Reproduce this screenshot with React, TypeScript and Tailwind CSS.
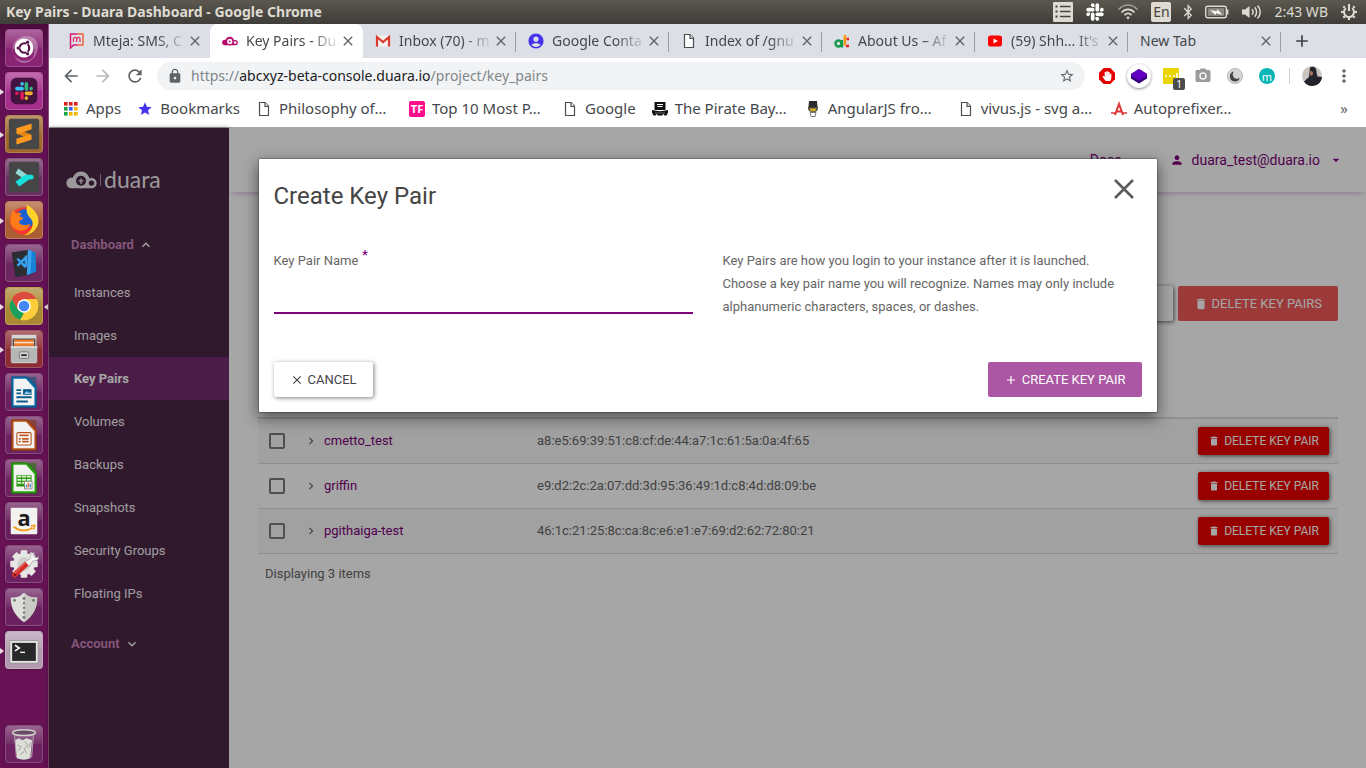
import React from "react";
import {
  MdAccountCircle,
  MdAdd,
  MdArrowBack,
  MdArrowDropDown,
  MdArrowForward,
  MdCameraAlt,
  MdClose,
  MdDelete,
  MdKeyboardArrowDown,
  MdKeyboardArrowRight,
  MdKeyboardArrowUp,
  MdLock,
  MdMoreVert,
  MdPerson,
  MdRefresh,
  MdStar,
  MdStarBorder,
} from "react-icons/md";
import { FaBluetoothB, FaHandPaper, FaSlack } from "react-icons/fa";

/* ---------- Desktop panel ---------- */

function TopPanel() {
  return (
    <header className="flex h-6 items-center bg-linear-to-b from-[#5c584f] to-[#3e3d39] pl-1.5 pr-2 text-[#dfdbd2]">
      <h1 className="flex-1 truncate text-sm font-bold">Key Pairs - Duara Dashboard - Google Chrome</h1>
      <div className="flex items-center gap-3">
        <svg width="20" height="20" viewBox="0 0 20 20" aria-hidden="true">
          <rect width="20" height="20" rx="1" fill="#dfdbd2" />
          <path d="M7 4.500h10.500M7 9.500h10.500M7 14.500h10.500" stroke="#45433e" strokeWidth="1.500" />
          <path d="M2.500 4.500h2M2.500 9.500h2M2.500 14.500h2" stroke="#45433e" strokeWidth="2" />
        </svg>
        <FaSlack className="size-5 text-white" />
        <svg width="22" height="16" viewBox="0 0 22 16" fill="none" stroke="#dfdbd2" aria-hidden="true">
          <path d="M1.500 5.500C7-.5 15-.5 20.500 5.500" strokeWidth="1.600" opacity=".55" />
          <path d="M4.500 8.500c4-4.300 9-4.300 13 0" strokeWidth="1.700" />
          <path d="M7.500 11.200c2.200-2.300 4.800-2.300 7 0" strokeWidth="1.700" />
          <circle cx="11" cy="13.800" r="1" fill="#dfdbd2" />
        </svg>
        <span className="flex size-5 items-center justify-center rounded-xs bg-[#dfdbd2] text-sm text-[#45433e]">En</span>
        <FaBluetoothB className="h-4 w-2.5" />
        <svg width="24" height="14" viewBox="0 0 24 14" fill="none" aria-hidden="true">
          <rect x=".7" y="1.200" width="20.600" height="11.600" rx="2" stroke="#dfdbd2" strokeWidth="1.400" />
          <rect x="2.800" y="3.200" width="16.400" height="7.600" fill="#8e8b83" />
          <path d="M22.500 4.500v5" stroke="#dfdbd2" strokeWidth="1.800" />
          <path d="M5 5l7 1.500V4l5.500 6L11 8v2.200z" fill="#fff" />
        </svg>
        <svg width="21" height="16" viewBox="0 0 21 16" fill="none" stroke="#dfdbd2" strokeWidth="1.500" aria-hidden="true">
          <path d="M1 5.500h3L8.500 2v12L4 10.500H1z" fill="#dfdbd2" stroke="none" />
          <path d="M11 5.200c1.300 1.600 1.300 4 0 5.600M13.700 3.300c2.500 2.700 2.500 6.700 0 9.400M16.500 1.500c3.600 3.700 3.600 9.300 0 13" />
        </svg>
        <time className="text-sm">2:43 WB</time>
        <svg width="18" height="18" viewBox="0 0 18 18" fill="none" stroke="#dfdbd2" aria-hidden="true">
          <path d="M5.800 5.200a5 5 0 1 0 6.400 0" strokeWidth="2" />
          <path d="M9 1v7" strokeWidth="2" />
          <path d="M3.300 3.300l1.500 1.500M14.700 3.300l-1.500 1.500M1 9h2.500M14.500 9h2.500M3.300 14.700l1.500-1.500M14.700 14.700l-1.500-1.500M9 14.500v2.500" strokeWidth="2.200" />
        </svg>
      </div>
    </header>
  );
}

/* ---------- Launcher ---------- */

function DocumentArt({ color, dark, children }: { color: string; dark: string; children: React.ReactNode }) {
  return (
    <>
      <path d="M6 3h16l10 10v22H6z" fill={color} />
      <path d="M22 3h10v10z" fill={dark} opacity=".55" />
      <path d="M8 5h13l9 10v18H8z" fill="#f3f3f3" />
      <path d="M6 3h16l10 10v22H6z" fill="none" stroke={dark} strokeWidth=".8" />
      {children}
    </>
  );
}

type LauncherItem = { name: string; tile: string; running?: boolean; focused?: boolean; art: React.ReactNode };

const gearTeeth = [0, 45, 90, 135, 180, 225, 270, 315];

const launcherItems: LauncherItem[] = [
  {
    name: "Search your computer",
    tile: "bg-[#8a2474]",
    art: (
      <>
        <path d="M7 23C5 10 20 2 30 9c6 5 4 17-2 22 3-8 3-16-4-20C17 8 9 13 7 23z" fill="#fff" opacity=".3" />
        <path d="M8 26c6 9 18 8 23 0-4 9-17 14-23 0z" fill="#fff" opacity=".3" />
        <circle cx="19" cy="19" r="10" fill="#fff" />
        <circle cx="19.500" cy="19" r="5" fill="none" stroke="#5a1349" strokeWidth="2.400" />
        <path d="M19.500 19L12 19M19.500 19l4.500-7M19.500 19l4.500 7" stroke="#fff" strokeWidth="1.300" />
        <circle cx="19.500" cy="19" r="3.600" fill="#fff" />
        <circle cx="12.800" cy="19" r="1.700" fill="#5a1349" />
        <circle cx="22.800" cy="12.800" r="1.700" fill="#5a1349" />
        <circle cx="22.800" cy="25.200" r="1.700" fill="#5a1349" />
      </>
    ),
  },
  {
    name: "Slack",
    tile: "bg-[#a52f8b]",
    running: true,
    art: (
      <>
        <rect x="5" y="5" width="28" height="28" rx="6" fill="#43123f" />
        <g strokeWidth="3.800" strokeLinecap="round">
          <path d="M17 11.500v.1M11.500 16.500h5.500" stroke="#36c5f0" />
          <path d="M21.500 11.500v5.500M26.500 16.500v.1" stroke="#2eb67d" />
          <path d="M26.500 21.500h-5M21.500 26.500v.1" stroke="#ecb22e" />
          <path d="M17 26.500v-5M11.500 21.500v.1" stroke="#e01e5a" />
        </g>
      </>
    ),
  },
  {
    name: "Sublime Text",
    tile: "bg-[#a0682f]",
    running: true,
    art: (
      <>
        <rect x="3" y="3" width="32" height="32" rx="2" fill="#474747" />
        <path d="M11 13l16-5v6l-8 3 8 3v5l-16 5v-6l8-2.500-8-3z" fill="#ff9a1f" />
        <path d="M11 19l8 2.500 8-2.500-8-2z" fill="#d97a10" opacity=".7" />
      </>
    ),
  },
  {
    name: "Editor",
    tile: "bg-[#6a2f61]",
    art: (
      <>
        <rect x="3" y="3" width="32" height="32" rx="2" fill="#454545" />
        <path d="M13 10l11 8-4 4-10-7z" fill="#8fd8d6" />
        <path d="M27 16.500c2.500 0 3.500 5 0 5l-3 .5-10 7-4-5 9-6.500c2-1 5-1 8-1z" fill="#16e0dc" />
      </>
    ),
  },
  {
    name: "Firefox",
    tile: "bg-[#ad5d33]",
    running: true,
    art: (
      <>
        <circle cx="19" cy="20" r="14.500" fill="#f5382e" />
        <circle cx="20" cy="17.500" r="10" fill="#1a5fd6" />
        <path d="M22 3c7 4 14 11 12 20-2 7-8 12-15 12 7-3 10-9 9-14-1-4-5-6-6-10-.5-3 0-5 0-8z" fill="#ffd32a" />
        <path d="M4.500 19c0-5 2-9 4-11 0 2 1 3 2 4 2-1 4-1 6 0-1 1-2 2-2 3 1 1 3 1 4 2-1 2-4 2-5 4 2 4 8 4 12 2-2 6-7 8-12 7-5-1-9-5-9-11z" fill="#ff7b1a" />
      </>
    ),
  },
  {
    name: "Visual Studio Code",
    tile: "bg-[#6c2660]",
    art: (
      <>
        <path d="M6 8l18-3 4 3v23l-18 3z" fill="#2b2d33" />
        <path d="M24 5l7 3 1 20-9 4z" fill="#1583d8" />
        <path d="M23 5l4 1-1 23-4 3z" fill="#3aa4f0" />
        <path d="M12 14.500l9 9M12 22l9-9v10" fill="none" stroke="#35a0ee" strokeWidth="2.600" />
      </>
    ),
  },
  {
    name: "Google Chrome",
    tile: "bg-[#aa8934]",
    running: true,
    focused: true,
    art: (
      <>
        <circle cx="19" cy="19" r="15" fill="#fdce3b" />
        <path d="M6 11.500A15 15 0 0 1 32 11.500H19L12.500 23z" fill="#dc4b3e" />
        <path d="M6 11.500l6.500 11.300 6.500 3.700-4 7.000A15 15 0 0 1 6 11.500z" fill="#1aa05a" />
        <path d="M19 26.500l-1.500 7.500h1.500a15 15 0 0 0 13-22.500H19z" fill="#fdce3b" />
        <circle cx="19" cy="19" r="7.200" fill="#fff" />
        <circle cx="19" cy="19" r="5.600" fill="#4687f4" />
      </>
    ),
  },
  {
    name: "Files",
    tile: "bg-[#8b2c35]",
    running: true,
    art: (
      <>
        <path d="M6 4h26v30H6z" fill="#d4d4d2" />
        <path d="M7 8h24v9H7z" fill="#4a4a48" />
        <path d="M8.500 9h21v8h-21z" fill="#ee7a2c" />
        <path d="M8.500 11.500h21v1.500h-21z" fill="#f8e3cf" />
        <path d="M5 16h28v17H5z" fill="#b7b7b5" />
        <path d="M5 16h28v2H5z" fill="#d8d8d6" />
        <rect x="14" y="22" width="10" height="7" rx="1.500" fill="#d6d6d6" stroke="#777" />
        <path d="M16 25.500h6" stroke="#333" strokeWidth="2" />
      </>
    ),
  },
  {
    name: "LibreOffice Writer",
    tile: "bg-[#6c2260]",
    art: (
      <DocumentArt color="#0a6fa8" dark="#07507c">
        <path d="M11 17h5M11 20.500h5M11 24.500h16M11 29h12" stroke="#0b5c8e" strokeWidth="2" />
        <rect x="18" y="16" width="9" height="6" fill="#0b5c8e" />
        <path d="M19 21l3-3 2 2 2-1v2z" fill="#9bd0ee" />
      </DocumentArt>
    ),
  },
  {
    name: "LibreOffice Impress",
    tile: "bg-[#6c2260]",
    art: (
      <DocumentArt color="#b9531a" dark="#803408">
        <rect x="11.500" y="16.500" width="15" height="13" rx="1.500" fill="#fff" stroke="#b5521b" strokeWidth="1.200" />
        <path d="M14 19.500h10M17 23h7M17 26h7" stroke="#c0561c" strokeWidth="1.800" />
        <path d="M13.500 23h2M13.500 26h2" stroke="#c0561c" strokeWidth="1.800" />
      </DocumentArt>
    ),
  },
  {
    name: "LibreOffice Calc",
    tile: "bg-[#6c2260]",
    art: (
      <DocumentArt color="#2aa50f" dark="#157a04">
        <path d="M11 16h16v12H11z" fill="#2b9a12" />
        <path d="M12 17.500h4M17 17.500h4M22 17.500h4M12 21h4M17 21h4M22 21h4M12 24.200h4M17 24.200h4" stroke="#e6f7df" strokeWidth="2" />
        <rect x="19.500" y="22.500" width="8" height="8" fill="#fff" stroke="#888" />
        <path d="M21.500 29v-3M25.500 29v-4" stroke="#3f86d8" strokeWidth="1.500" />
        <path d="M23.500 29v-5" stroke="#ee6a2c" strokeWidth="1.500" />
      </DocumentArt>
    ),
  },
  {
    name: "Amazon",
    tile: "bg-[#68205c]",
    art: (
      <>
        <rect x="5" y="5" width="28" height="28" rx="1" fill="#f2f2f0" />
        <text x="19" y="24" textAnchor="middle" fontFamily="Open Sans, sans-serif" fontWeight="700" fontSize="23" fill="#1c1c1c">a</text>
        <path d="M8 25c7 5 14 5 20 1" fill="none" stroke="#f79a1c" strokeWidth="1.900" />
        <path d="M26 24l4.500-.3-1.500 4.500" fill="none" stroke="#f79a1c" strokeWidth="1.500" />
      </>
    ),
  },
  {
    name: "System Settings",
    tile: "bg-[#6c2260]",
    art: (
      <>
        <g fill="#e6e6e3">
          {gearTeeth.map((angle) => (
            <rect key={angle} x="15.500" y="4.500" width="7" height="8" rx="1" transform={`rotate(${angle} 19 19)`} />
          ))}
          <circle cx="19" cy="19" r="11.500" />
        </g>
        <circle cx="19" cy="19" r="7" fill="#cfcfcc" />
        <path d="M20 17l6-4c-1-3 1-6 4-6l-1 3.500 2 2 3.500-1c0 3-3 5-6 4l-4 6z" fill="#f4f4f2" stroke="#9a9a98" strokeWidth=".7" />
        <path d="M20 16.500l4 4-13 12c-3 2-6-1-4-4z" fill="#d62f2a" />
        <path d="M20 18L9 29" stroke="#f07a72" strokeWidth="1" />
        <circle cx="9.500" cy="30.500" r="1.200" fill="#7a1210" />
      </>
    ),
  },
  {
    name: "Shield",
    tile: "bg-[#6c2260]",
    art: (
      <>
        <path d="M19 4l4 3c3 1.500 6 2 10 2 0 12-5 20-14 26C10 29 5 21 5 9c4 0 7-.5 10-2z" fill="#dededa" />
        <path d="M19 4l4 3c3 1.500 6 2 10 2 0 12-5 20-14 26z" fill="#c9c9c5" />
        <g fill="#77777a">
          <circle cx="19" cy="10" r="1.500" />
          <circle cx="19" cy="15" r="1.200" />
          <circle cx="19" cy="20" r="1.200" />
          <circle cx="19" cy="25" r="1.200" />
          <circle cx="19" cy="30" r="1.500" />
          <circle cx="9" cy="12" r="1.500" />
          <circle cx="29" cy="12" r="1.500" />
        </g>
      </>
    ),
  },
  {
    name: "Terminal",
    tile: "bg-[#b39ab0]",
    running: true,
    art: (
      <>
        <rect x="4" y="9" width="30" height="24" rx="1" fill="#e4e4e2" stroke="#8d8d8b" strokeWidth=".8" />
        <rect x="6.500" y="11.500" width="25" height="19" fill="#262829" />
        <path d="M9.500 14l4.500 3-4.500 3" fill="none" stroke="#fff" strokeWidth="1.700" />
        <path d="M15 21.500h5" stroke="#fff" strokeWidth="1.500" />
      </>
    ),
  },
];

const trashItem: LauncherItem = {
  name: "Trash",
  tile: "bg-[#6c2260]",
  art: (
    <>
      <path d="M8 8h22l-3 26H11z" fill="#8f6489" opacity=".7" />
      <path d="M9.500 15l4-2 4 2 4-2 6 2-2 19c-4 2-9 2-14 0z" fill="#deded9" />
      <path d="M12 20l4 2-3 4M20 16l3 5-4 3 3 5M26 18l-2 5M15 30l4-3" fill="none" stroke="#a3a39e" strokeWidth="1" />
      <ellipse cx="19" cy="7" rx="12" ry="3" fill="#6d4b69" stroke="#cfcfcb" strokeWidth="1.600" />
      <path d="M9 10l2 23M29 10l-2 23" stroke="#b0a2ae" strokeWidth="1" />
    </>
  ),
};

function LauncherButton({ item }: { item: LauncherItem }) {
  return (
    <button
      type="button"
      aria-label={item.name}
      className={`relative block size-[38px] rounded-sm border border-white/20 shadow-[0_0_2px_rgba(0,0,0,0.4)] ${item.tile}`}
    >
      <span className="absolute inset-x-0 top-0 h-1/2 rounded-t-sm bg-linear-to-b from-white/30 to-white/5" />
      <svg className="absolute inset-0" width="36" height="36" viewBox="0 0 38 38" aria-hidden="true">
        {item.art}
      </svg>
      {item.running && (
        <svg className="absolute -left-1.5 top-4" width="4" height="6" viewBox="0 0 4 6" aria-hidden="true">
          <path d="M0 0l4 3-4 3z" fill="#e6dce4" />
        </svg>
      )}
      {item.focused && (
        <svg className="absolute -right-1.5 top-4" width="4" height="6" viewBox="0 0 4 6" aria-hidden="true">
          <path d="M4 0L0 3l4 3z" fill="#e6dce4" />
        </svg>
      )}
    </button>
  );
}

function Launcher() {
  return (
    <nav
      aria-label="Launcher"
      className="flex w-[49px] shrink-0 flex-col items-start gap-[5px] border-r border-[#8d5283] bg-linear-to-b from-[#4c0b3d] via-[#661155] via-5% to-[#671254] p-[5px]"
    >
      {launcherItems.map((item) => (
        <LauncherButton key={item.name} item={item} />
      ))}
      <div className="mt-auto">
        <LauncherButton item={trashItem} />
      </div>
    </nav>
  );
}

/* ---------- Browser ---------- */

function FileIcon() {
  return (
    <svg width="16" height="16" viewBox="0 0 16 16" fill="#fff" stroke="#4a4d51" strokeWidth="1.200" aria-hidden="true">
      <path d="M3.500 1.500h5.500l3.500 3.500v9.500h-9z" />
      <path d="M9 1.500v3.800h3.500" />
    </svg>
  );
}

function CloudMark({ className }: { className: string }) {
  return (
    <svg className={className} viewBox="0 0 32 18" aria-hidden="true">
      <circle cx="5.800" cy="12" r="5.500" fill="currentColor" />
      <path d="M5.800 13h20v4.500h-20z" fill="currentColor" />
      <circle cx="15.500" cy="9" r="8.700" fill="currentColor" />
      <circle cx="26.300" cy="12.200" r="5.400" fill="currentColor" />
      <circle cx="15.500" cy="9.800" r="5.200" className="fill-(--cloud-hole)" />
      <circle cx="26.300" cy="12.200" r="2.800" className="fill-(--cloud-hole)" />
      <path d="M15.500 7.500v5.500M13 10h5" stroke="currentColor" strokeWidth="1.300" />
    </svg>
  );
}

type Tab = { title: string; icon?: React.ReactNode; active?: boolean; divider?: boolean };

const tabs: Tab[] = [
  {
    title: "Mteja: SMS, C",
    icon: (
      <svg width="16" height="16" viewBox="0 0 16 16" fill="none" strokeWidth="1.500" aria-hidden="true">
        <path d="M8 1H1.500v14L4.500 12H8" stroke="#d81b7a" />
        <path d="M8 12h6V1H8" stroke="#f0643c" />
        <path d="M4.500 9V5.500c0-1.600 3.200-1.600 3.200 0V9M7.700 5.500c0-1.600 3.300-1.600 3.300 0V9" stroke="#e13560" strokeWidth="1.300" />
      </svg>
    ),
  },
  {
    title: "Key Pairs - Du",
    icon: <CloudMark className="h-4 w-4 text-[#b5076b] [--cloud-hole:#ffffff]" />,
    active: true,
  },
  {
    title: "Inbox (70) - m",
    icon: (
      <svg width="16" height="16" viewBox="0 0 16 16" aria-hidden="true">
        <path d="M1 2.500h14v11H1z" fill="#f3f0ee" />
        <path d="M2 13.500V4l6 5 6-5v9.500" fill="none" stroke="#d93a2b" strokeWidth="2.200" />
      </svg>
    ),
    divider: true,
  },
  { title: "Google Conta", icon: <MdAccountCircle className="size-[18px] shrink-0 text-[#4433ee]" />, divider: true },
  { title: "Index of /gnu", icon: <FileIcon />, divider: true },
  {
    title: "About Us – Af",
    icon: (
      <svg width="16" height="16" viewBox="0 0 16 16" fill="none" strokeWidth="2.400" aria-hidden="true">
        <circle cx="4.500" cy="10.500" r="3" stroke="#149a4a" />
        <path d="M8 7v7.500" stroke="#149a4a" />
        <path d="M11 2v10.500" stroke="#f49a12" />
        <path d="M9.500 6h2.500" stroke="#f49a12" />
        <path d="M12.500 6H15M12 13h3" stroke="#e52222" />
      </svg>
    ),
    divider: true,
  },
  {
    title: "(59) Shh... It's",
    icon: (
      <svg width="16" height="16" viewBox="0 0 16 16" aria-hidden="true">
        <rect x="1" y="2.500" width="14" height="11" rx="2.500" fill="#f00" />
        <path d="M6.500 5.500v5L11 8z" fill="#fff" />
      </svg>
    ),
    divider: true,
  },
  { title: "New Tab", divider: true },
];

function TabStrip() {
  return (
    <div className="flex h-[34px] items-stretch bg-[#dcdfe6] pl-2">
      <div role="tablist" className="flex min-w-0 flex-[0_1_1224px]">
        {tabs.map((tab) => (
          <div
            key={tab.title}
            role="tab"
            aria-selected={!!tab.active}
            className={`relative flex min-w-0 flex-1 items-center gap-2 pl-3 pr-[7px] ${tab.active ? "rounded-t-lg bg-white" : ""}`}
          >
            {tab.icon && <span className="flex w-4 shrink-0 justify-center">{tab.icon}</span>}
            <span
              className={`-mr-2 min-w-0 flex-1 overflow-hidden whitespace-nowrap text-sm text-[#45484c] ${
                tab.icon ? "[mask-image:linear-gradient(to_right,black_68%,transparent)]" : ""
              }`}
            >
              {tab.title}
            </span>
            <button type="button" aria-label={`Close ${tab.title}`} className="shrink-0 text-[#5f6368]">
              <MdClose className="size-4" />
            </button>
            {tab.divider && <span className="absolute right-0 top-2 h-5 w-px bg-[#9a9da3]" />}
          </div>
        ))}
      </div>
      <button type="button" aria-label="New tab" className="ml-[11px] flex items-center text-[#3c4043]">
        <MdAdd className="size-5" />
      </button>
    </div>
  );
}

function Toolbar() {
  const navButton = "flex size-8 items-center justify-center";
  return (
    <div className="flex h-9 items-center bg-white pl-1.5 text-[#5f6368]">
      <button type="button" aria-label="Back" className={navButton}>
        <MdArrowBack className="size-5" />
      </button>
      <button type="button" aria-label="Forward" className={navButton}>
        <MdArrowForward className="size-5 text-[#b9bbbe]" />
      </button>
      <button type="button" aria-label="Reload" className={navButton}>
        <MdRefresh className="size-5" />
      </button>
      <div className="ml-1.5 flex h-7 flex-1 items-center rounded-full bg-[#f1f3f4] px-2.5">
        <MdLock className="size-4 shrink-0" />
        <p className="flex-1 pl-2 text-sm text-[#80868b]">
          https://<span className="text-[#202124]">abcxyz-beta-console.duara.io</span>/project/key_pairs
        </p>
        <button type="button" aria-label="Bookmark this page">
          <MdStarBorder className="size-4" />
        </button>
      </div>
      <div className="ml-1.5 flex items-center">
        <button type="button" aria-label="Ad blocker" className={navButton}>
          <svg width="16" height="16" viewBox="0 0 16 16" aria-hidden="true">
            <path d="M4.700 0h6.600L16 4.700v6.600L11.300 16H4.700L0 11.300V4.700z" fill="#e30000" />
            <FaHandPaper x="3" y="3" size={10} color="#fff" />
          </svg>
        </button>
        <button type="button" aria-label="Layers" className={navButton}>
          <span className="flex size-6 items-center justify-center rounded-full bg-white shadow-[0_1px_3px_rgba(0,0,0,0.45)]">
            <svg width="16" height="16" viewBox="0 0 16 16" aria-hidden="true">
              <path d="M0 6l8-5 8 5v4.500L8 15.500 0 10.500z" fill="#36007d" />
              <path d="M0 6l8-5 8 5v1.500l-8 5-8-5z" fill="#6200c2" />
            </svg>
          </span>
        </button>
        <button type="button" aria-label="Notes" className={`${navButton} relative`}>
          <svg width="16" height="16" viewBox="0 0 16 16" aria-hidden="true">
            <rect width="16" height="16" rx="1" fill="#ead500" />
            <path d="M2 8h2M6 8h2M10 8h2M14 5v6" stroke="#fff" strokeWidth="1.600" />
          </svg>
          <span className="absolute bottom-0.5 right-0.5 flex size-3 items-center justify-center rounded-xs bg-[#4d4d4d] text-[10px] text-white">1</span>
        </button>
        <button type="button" aria-label="Screenshot" className={navButton}>
          <MdCameraAlt className="size-[18px] text-[#9b9b9b]" />
        </button>
        <button type="button" aria-label="Dark mode" className={navButton}>
          <svg width="16" height="16" viewBox="0 0 16 16" aria-hidden="true">
            <circle cx="8" cy="8" r="7.600" fill="#d6d6d6" stroke="#aaa" strokeWidth=".8" />
            <path d="M7 3.500A5 5 0 1 0 12.800 9.500 4 4 0 0 1 7 3.500z" fill="#444" />
          </svg>
        </button>
        <button type="button" aria-label="Mteja" className={navButton}>
          <span className="flex size-4 items-center justify-center rounded-full bg-[#07b5b5] text-[11px] leading-none text-white">m</span>
        </button>
        <span className="ml-1.5 mr-3 h-4 w-px bg-[#cfd2d6]" />
        <button type="button" aria-label="Profile">
          <svg width="20" height="20" viewBox="0 0 20 20" aria-hidden="true">
            <circle cx="10" cy="10" r="10" fill="#c9c4bf" />
            <path d="M8 1.500c4-2 7 1 6.500 5l1 4 4.500.5c-.3 5-4.500 9-10 9-3.500 0-6.500-2-8-4.500L7 11z" fill="#22232b" />
            <path d="M8 5.500c1.500-1 3 0 3 2s-2 3-3 1.500z" fill="#a9705a" />
          </svg>
        </button>
        <button type="button" aria-label="Menu" className="flex w-11 justify-center">
          <MdMoreVert className="size-5" />
        </button>
      </div>
    </div>
  );
}

const appDots = [
  "#e02020", "#e02020", "#e02020",
  "#16a34a", "#3b5bfd", "#f2b600",
  "#16a34a", "#f2b600", "#f2b600",
];

const bookmarks: { title: string; short?: boolean; icon: React.ReactNode }[] = [
  {
    title: "Apps",
    short: true,
    icon: (
      <svg width="16" height="16" viewBox="0 0 16 16" aria-hidden="true">
        {appDots.map((fill, i) => (
          <rect key={i} x={1 + (i % 3) * 5} y={1 + Math.floor(i / 3) * 5} width="3.600" height="3.600" fill={fill} />
        ))}
      </svg>
    ),
  },
  { title: "Bookmarks", short: true, icon: <MdStar className="size-4 text-[#4433ee]" /> },
  { title: "Philosophy of…", icon: <FileIcon /> },
  {
    title: "Top 10 Most P…",
    icon: (
      <span className="flex size-4 items-center justify-center rounded-xs bg-[#ff0f8c] text-[11px] font-bold leading-none text-white">TF</span>
    ),
  },
  { title: "Google", short: true, icon: <FileIcon /> },
  {
    title: "The Pirate Bay…",
    icon: (
      <svg width="16" height="16" viewBox="0 0 16 16" aria-hidden="true">
        <path d="M2.500 1h11v8h-11zM0 9c5 1.500 11 1.500 16 0v2.500l-1.500 3h-2l-1-1.500-1.500 1.500H6L4.500 13l-1 1.500h-2L0 11.500z" fill="#111" />
        <path d="M5 3.500h6M5.500 5.500h5" stroke="#fff" />
        <path d="M3 12h10" stroke="#777" strokeWidth=".8" />
      </svg>
    ),
  },
  {
    title: "AngularJS fro…",
    icon: (
      <svg width="16" height="16" viewBox="0 0 16 16" aria-hidden="true">
        <path d="M4 0h8l.5 6h-9z" fill="#2b2b2b" />
        <path d="M3 6h10c0 3-1 5-5 5S3 9 3 6z" fill="#4a4436" />
        <path d="M4.500 7.500h7c-.5 2-1.500 3-3.500 3s-3-1-3.500-3z" fill="#d9b52a" />
        <path d="M5 11.500h6l-1 4H6z" fill="none" stroke="#777" />
      </svg>
    ),
  },
  { title: "vivus.js - svg a…", icon: <FileIcon /> },
  {
    title: "Autoprefixer…",
    icon: (
      <svg width="16" height="16" viewBox="0 0 16 16" fill="none" stroke="#dd3735" aria-hidden="true">
        <path d="M0 12h4.500M11.500 12H16" strokeWidth="1.300" />
        <path d="M4 14L8 3l4 11M5.500 10.500h5" strokeWidth="2" />
      </svg>
    ),
  },
];

function BookmarkBar() {
  return (
    <div className="flex h-[34px] items-center border-b border-[#a8a8a6] bg-white pb-1 pl-3.5 pr-[18px] text-[15px] text-[#45484c]">
      <ul className="flex flex-1 items-center gap-4">
        {bookmarks.map((b) => (
          <li key={b.title}>
            <a href="#" className="flex items-center gap-[7px]">
              <span className="flex w-4 shrink-0 justify-center">{b.icon}</span>
              <span className={b.short ? "whitespace-nowrap" : "w-[114px] whitespace-nowrap"}>{b.title}</span>
            </a>
          </li>
        ))}
      </ul>
      <button type="button" aria-label="More bookmarks" className="text-[#5f6368]">»</button>
    </div>
  );
}

/* ---------- Duara console ---------- */

const navItems = ["Instances", "Images", "Key Pairs", "Volumes", "Backups", "Snapshots", "Security Groups", "Floating IPs"];

function Sidebar() {
  return (
    <aside className="w-[180px] shrink-0 bg-[#4b2545] shadow-[0_0_4px_rgba(0,0,0,0.5)]">
      <a href="#" aria-label="duara" className="flex h-[95px] items-center gap-[3px] pl-[17px] pt-2 text-[#efeaee]">
        <CloudMark className="h-[18px] w-[31px] [--cloud-hole:#4b2545]" />
        <span className="h-3 w-px bg-white/50" />
        <span className="font-[Lato] text-[23px] leading-none">duara</span>
      </a>
      <nav>
        <button type="button" className="flex h-[43px] w-full items-center gap-1 pl-[22px] text-left font-bold text-[#c983bd]">
          Dashboard
          <MdKeyboardArrowUp className="size-4 text-white" />
        </button>
        <ul className="mb-[7px] mt-[5px]">
          {navItems.map((item) => (
            <li key={item}>
              <a
                href="#"
                className={`flex h-[43px] items-center pl-[25px] ${
                  item === "Key Pairs" ? "bg-[#722b6d] font-bold text-white" : "text-[#f4eff3]"
                }`}
              >
                {item}
              </a>
            </li>
          ))}
        </ul>
        <button type="button" className="flex h-[43px] w-full items-center gap-1 pl-[22px] text-left font-bold text-[#c983bd]">
          Account
          <MdKeyboardArrowDown className="size-4 text-white" />
        </button>
      </nav>
    </aside>
  );
}

const keyPairs = [
  { name: "cmetto_test", fingerprint: "a8:e5:69:39:51:c8:cf:de:44:a7:1c:61:5a:0a:4f:65" },
  { name: "griffin", fingerprint: "e9:d2:2c:2a:07:dd:3d:95:36:49:1d:c8:4d:d8:09:be" },
  { name: "pgithaiga-test", fingerprint: "46:1c:21:25:8c:ca:8c:e6:e1:e7:69:d2:62:72:80:21" },
];

function KeyPairsPage() {
  return (
    <div className="min-w-0 flex-1 bg-white">
      <header className="flex h-16 items-center justify-end pr-[22px] text-sm text-[#7c0077] shadow-[0_4px_5px_-3px_rgba(123,0,118,0.3)]">
        <a href="#">Docs</a>
        <button type="button" className="ml-12 flex items-center">
          <MdPerson className="size-3.5" />
          <span className="px-2">duara_test@duara.io</span>
          <MdArrowDropDown className="size-4" />
        </button>
      </header>
      <main className="pl-[29px] pr-7">
        <div className="flex justify-end gap-[5px] pt-[94px]">
          <button type="button" aria-label="Import" className="h-[35px] w-40 rounded-xs bg-white shadow-[1px_1px_4px_rgba(0,0,0,0.6)]" />
          <button type="button" disabled className="flex h-[35px] items-center gap-1 rounded-xs bg-[#f05a5a] px-4 text-white">
            <MdDelete className="size-3.5" />
            DELETE KEY PAIRS
          </button>
        </div>
        <table className="mt-12 w-full border-collapse">
          <thead>
            <tr className="h-[49px] border-b-2 border-[#dcdcdc]">
              <th className="w-10" />
              <th className="w-[26px]" />
              <th className="w-[213px]" />
              <th />
              <th />
            </tr>
          </thead>
          <tbody>
            {keyPairs.map((kp) => (
              <tr key={kp.name} className="h-[45px] border-b border-[#dcdcdc] odd:bg-[#f7f7f7]">
                <td className="pl-[11px]">
                  <input
                    type="checkbox"
                    aria-label={`Select ${kp.name}`}
                    className="block size-4 appearance-none rounded-xs border-2 border-[#7a7a7a]"
                  />
                </td>
                <td>
                  <MdKeyboardArrowRight className="ml-1.5 size-3.5" />
                </td>
                <td>
                  <a href="#" className="text-[#7c0077]">{kp.name}</a>
                </td>
                <td>{kp.fingerprint}</td>
                <td>
                  <button
                    type="button"
                    className="ml-auto mr-[9px] flex h-7 items-center gap-1 rounded-xs bg-[#ea0000] px-2.5 text-xs text-white shadow-[1px_1px_4px_rgba(0,0,0,0.6)]"
                  >
                    <MdDelete className="size-3" />
                    DELETE KEY PAIR
                  </button>
                </td>
              </tr>
            ))}
          </tbody>
        </table>
        <p className="py-2 pl-[7px] leading-6">Displaying 3 items</p>
      </main>
    </div>
  );
}

function CreateKeyPairDialog() {
  return (
    <div className="absolute inset-0 flex items-start justify-center bg-black/35 pt-[30px]">
      <form
        role="dialog"
        aria-label="Create Key Pair"
        className="w-full max-w-[900px] rounded-xs border border-black/20 bg-white bg-clip-padding px-[15px] pb-[15px] shadow-[0_5px_15px_rgba(0,0,0,0.5)]"
        onSubmit={(e) => e.preventDefault()}
      >
        <div className="flex h-[90px] items-start justify-between pt-[18px]">
          <h2 className="text-2xl leading-[38px] text-[#444]">Create Key Pair</h2>
          <button type="button" aria-label="Close" className="pr-1.5">
            <svg width="24" height="24" viewBox="0 0 24 24" stroke="#5c5c5c" strokeWidth="2.600" aria-hidden="true">
              <path d="M3 3l18 18M21 3L3 21" />
            </svg>
          </button>
        </div>
        <div className="grid grid-cols-2 gap-[30px] leading-[23px]">
          <div>
            <label htmlFor="key-name" className="flex gap-1">
              Key Pair Name
              <span className="text-xs font-bold leading-3 text-[#7c0077]">*</span>
            </label>
            <input id="key-name" type="text" className="block h-[42px] w-full border-b-2 border-[#7c0077] outline-none" />
          </div>
          <p className="pr-4">
            Key Pairs are how you login to your instance after it is launched. Choose a key pair name you will recognize.
            Names may only include alphanumeric characters, spaces, or dashes.
          </p>
        </div>
        <div className="flex justify-between pt-11">
          <button
            type="button"
            className="flex h-[35px] items-center gap-1 rounded-xs bg-white px-4 text-[#444] shadow-[1px_1px_4px_rgba(0,0,0,0.5)]"
          >
            <MdClose className="size-3.5" />
            CANCEL
          </button>
          <button type="submit" className="flex h-[35px] items-center gap-1 rounded-xs bg-[#ab57a3] px-4 text-white">
            <MdAdd className="size-3.5" />
            CREATE KEY PAIR
          </button>
        </div>
      </form>
    </div>
  );
}

export default function App() {
  return (
    <div className="flex min-h-screen flex-col font-['Noto_Sans',sans-serif]">
      <TopPanel />
      <div className="flex flex-1">
        <Launcher />
        <div className="flex min-w-0 flex-1 flex-col">
          <TabStrip />
          <Toolbar />
          <BookmarkBar />
          <div className="relative flex flex-1 font-[Roboto,sans-serif] text-[13px] text-[#666]">
            <Sidebar />
            <KeyPairsPage />
            <CreateKeyPairDialog />
          </div>
        </div>
      </div>
    </div>
  );
}
